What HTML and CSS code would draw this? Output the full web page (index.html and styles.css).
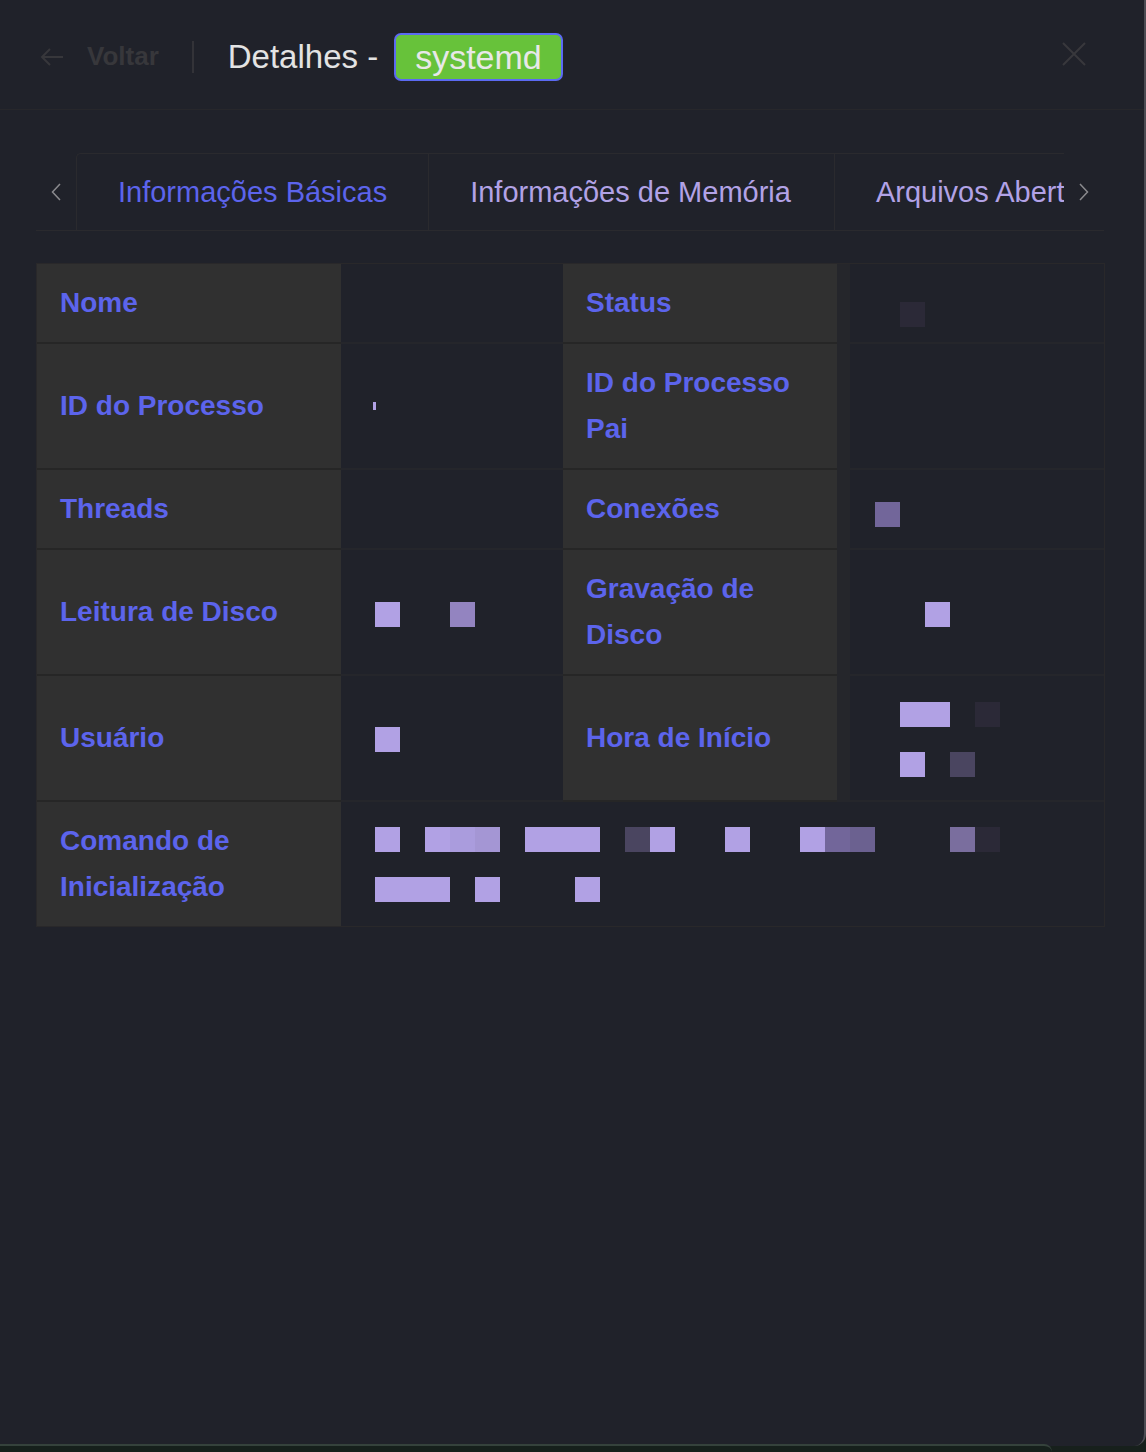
FILE: index.html
```html
<!DOCTYPE html>
<html lang="pt">
<head>
<meta charset="utf-8">
<title>Detalhes - systemd</title>
<link rel="stylesheet" href="styles.css">
</head>
<body>
<div class="panel">
  <header class="head">
    <div class="back">
      <svg class="back-ico" width="24" height="20" viewBox="0 0 24 20"><path d="M23 10H2M10 2L2 10L10 18" fill="none" stroke="currentColor" stroke-width="2"/></svg>
      <span>Voltar</span>
    </div>
    <span class="sep"></span>
    <h1 class="title">Detalhes -<span class="tag">systemd</span></h1>
    <svg class="close" width="24" height="24" viewBox="0 0 24 24"><path d="M1 1L23 23M23 1L1 23" fill="none" stroke="currentColor" stroke-width="2"/></svg>
  </header>

  <main class="content">
    <div class="tabs">
      <span class="nav">
        <svg width="10" height="18" viewBox="0 0 10 18"><path d="M9 1L1.5 9L9 17" fill="none" stroke="currentColor" stroke-width="1.5"/></svg>
      </span>
      <div class="tab-scroll">
        <div class="tab-list">
          <div class="tab active">Informações Básicas</div>
          <div class="tab">Informações de Memória</div>
          <div class="tab">Arquivos Abertos</div>
        </div>
      </div>
      <span class="nav">
        <svg width="10" height="18" viewBox="0 0 10 18"><path d="M1 1L8.5 9L1 17" fill="none" stroke="currentColor" stroke-width="1.5"/></svg>
      </span>
    </div>

    <div class="desc">
      <div class="lbl">Nome</div>
      <div class="val v1"></div>
      <div class="lbl l2">Status</div>
      <div class="val v2 o38"><div class="px"><i class="s"></i><i class="k"></i></div></div>

      <div class="lbl">ID do Processo</div>
      <div class="val v1 o58"><span class="tick"></span></div>
      <div class="lbl l2">ID do Processo Pai</div>
      <div class="val v2"></div>

      <div class="lbl">Threads</div>
      <div class="val v1"></div>
      <div class="lbl l2">Conexões</div>
      <div class="val v2 o32"><div class="px"><i class="e"></i></div></div>

      <div class="lbl">Leitura de Disco</div>
      <div class="val v1 o52"><div class="px"><i class="a"></i><i class="s"></i><i class="s"></i><i class="d"></i></div></div>
      <div class="lbl l2">Gravação de Disco</div>
      <div class="val v2 o52"><div class="px"><i class="s"></i><i class="s"></i><i class="a"></i></div></div>

      <div class="lbl">Usuário</div>
      <div class="val v1 o51"><div class="px"><i class="a"></i></div></div>
      <div class="lbl l2">Hora de Início</div>
      <div class="val v2 o26 pb23">
        <div class="px"><i class="s"></i><i class="a"></i><i class="a"></i><i class="s"></i><i class="k"></i></div>
        <div class="px"><i class="s"></i><i class="a"></i><i class="s"></i><i class="h"></i></div>
      </div>

      <div class="lbl last">Comando de Inicialização</div>
      <div class="val v1 wide last o25">
        <div class="px"><i class="a"></i><i class="s"></i><i class="a"></i><i class="b"></i><i class="c"></i><i class="s"></i><i class="a"></i><i class="a"></i><i class="a"></i><i class="s"></i><i class="h"></i><i class="a"></i><i class="s"></i><i class="s"></i><i class="a"></i><i class="s"></i><i class="s"></i><i class="a"></i><i class="e"></i><i class="f"></i><i class="s"></i><i class="s"></i><i class="s"></i><i class="g"></i><i class="k"></i></div>
        <div class="px"><i class="a"></i><i class="a"></i><i class="a"></i><i class="s"></i><i class="a"></i><i class="s"></i><i class="s"></i><i class="s"></i><i class="a"></i></div>
      </div>
    </div>
  </main>
</div>
<div class="under"></div>
</body>
</html>
```

FILE: styles.css
```css
html, body {
  margin: 0;
  padding: 0;
}

body {
  background: #17201c;
  font-family: "Liberation Sans", Arial, sans-serif;
  overflow: hidden;
}

.panel {
  width: 1144px;
  height: 1446px;
  background: #20222a;
  border-right: 2px solid #4c4c53;
  border-bottom-right-radius: 12px;
}

/* Header */
.head {
  height: 110px;
  border-bottom: 1px solid #27272b;
  display: flex;
  align-items: center;
  padding: 4px 58px 0 40px;
  box-sizing: border-box;
}

.back {
  display: flex;
  align-items: center;
  gap: 23px;
  color: #37373b;
  font-size: 26px;
  font-weight: 700;
}

.back-ico {
  display: block;
}

.sep {
  width: 2px;
  height: 32px;
  background: #333338;
  margin: 0 34px 0 33px;
}

.title {
  flex: 1;
  margin: 0;
  display: flex;
  align-items: center;
  font-size: 33px;
  font-weight: 400;
  color: #e3e3e3;
}

.tag {
  margin-left: 16px;
  height: 48px;
  box-sizing: border-box;
  padding: 0 19px;
  line-height: 44px;
  font-size: 34px;
  color: #e8e8e8;
  background: #67c23a;
  border: 2px solid #5b6af2;
  border-radius: 7px;
}

.close {
  color: #38383c;
  display: block;
  margin-top: -6px;
}

/* Content */
.content {
  padding: 43px 38px 0 36px;
}

.tabs {
  display: flex;
  height: 78px;
}

.nav {
  width: 40px;
  flex: none;
  display: flex;
  align-items: center;
  justify-content: center;
  color: #8a8a8e;
  border-bottom: 1px solid #2a2a2e;
  box-sizing: border-box;
}

.tab-scroll {
  width: 988px;
  flex: none;
  overflow: hidden;
  border-bottom: 1px solid #2a2a2e;
  box-sizing: border-box;
}

.tab-list {
  display: flex;
  white-space: nowrap;
  border-top: 1px solid #2a2a2e;
  border-left: 1px solid #2a2a2e;
  border-top-left-radius: 5px;
}

.tab {
  flex: none;
  height: 76px;
  line-height: 76px;
  padding: 0 41px;
  font-size: 29px;
  color: #b2a2e6;
  box-sizing: border-box;
}

.tab + .tab {
  border-left: 1px solid #2a2a2e;
}

.tab.active {
  color: #5c64ec;
}

.tab-list .tab:nth-child(2) {
  padding-right: 43px;
}

.tabs + .desc {
  margin-top: 32px;
}

/* Descriptions table */
.desc {
  width: 1069px;
  box-sizing: border-box;
  display: grid;
  grid-template-columns: 304px 222px 274px 267px;
  border: 1px solid #29282a;
}

.lbl {
  display: flex;
  align-items: center;
  background: #303030;
  color: #5c64ec;
  font-size: 28px;
  font-weight: 700;
  line-height: 46px;
  padding: 16px 20px 16px 23px;
  border-bottom: 2px solid #262626;
}

.val {
  border-bottom: 2px solid #25262b;
}

.v1 {
  padding-left: 34px;
}

.v2 {
  padding-left: 25px;
  border-left: 13px solid #25262b;
}

.wide {
  grid-column: 2 / 5;
}

.last {
  border-bottom: none;
}

.o25 { padding-top: 25px; }
.o26 { padding-top: 26px; }
.o32 { padding-top: 32px; }
.o38 { padding-top: 38px; }
.o51 { padding-top: 51px; }
.o52 { padding-top: 52px; }
.o58 { padding-top: 58px; }
.pb23 { padding-bottom: 23px; }

.px {
  display: flex;
  height: 25px;
}

.px + .px {
  margin-top: 25px;
}

.px i {
  display: block;
  width: 25px;
  height: 25px;
  flex: none;
}

.px .s { background: transparent; }
.px .a { background: #b1a1e4; }
.px .b { background: #aa9cdd; }
.px .c { background: #a496d4; }
.px .d { background: #9384c0; }
.px .e { background: #72669a; }
.px .f { background: #6b6190; }
.px .g { background: #7a6e9e; }
.px .h { background: #4a4560; }
.px .k { background: #2b2937; }

.tick {
  display: block;
  width: 3px;
  height: 8px;
  margin-left: -2px;
  background: #b1a1e4;
}

.under {
  width: 1052px;
  height: 6px;
  margin-top: -2px;
  border-top: 2px solid #35423c;
  border-top-right-radius: 10px;
  background: #16201c;
}
```
